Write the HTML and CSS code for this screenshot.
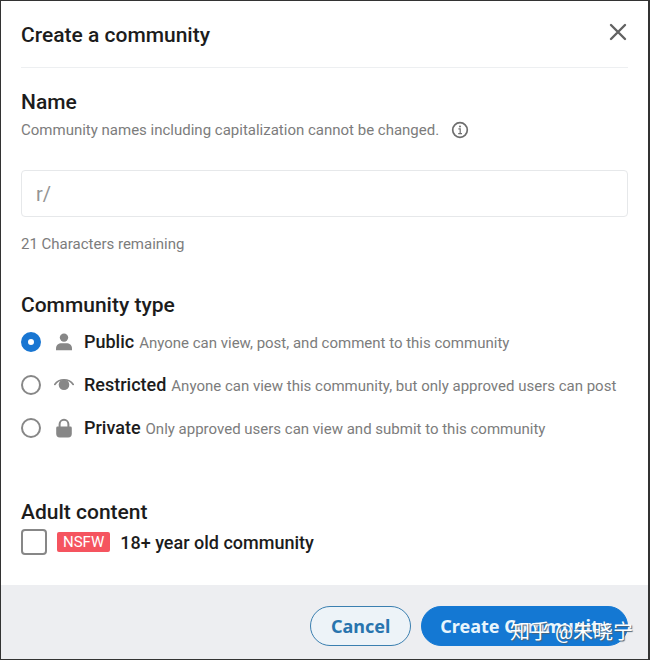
FILE: index.html
```html
<!DOCTYPE html>
<html lang="en">
<head>
<meta charset="utf-8">
<title>Create a community</title>
<link rel="stylesheet" href="styles.css">
</head>
<body>
<form class="dialog">
  <div class="content">
    <header class="header">
      <h1 class="heading">Create a community</h1>
      <button class="close" type="button" aria-label="Close">
        <svg width="18" height="18" viewBox="0 0 18 18"><path d="M2 2 16 16M16 2 2 16" fill="none" stroke="#626262" stroke-width="2.4" stroke-linecap="round"/></svg>
      </button>
    </header>

    <section class="name">
      <label class="heading" for="name">Name</label>
      <p class="hint">Community names including capitalization cannot be changed.
        <svg width="18" height="18" viewBox="0 0 18 18"><circle cx="9" cy="9" r="7.3" fill="none" stroke="#6e6e6e" stroke-width="1.7"/><path d="M7.4 7.8H9.2V12.4M7.2 12.6H11" fill="none" stroke="#6e6e6e" stroke-width="1.2"/><circle cx="9" cy="5.4" r="1" fill="#6e6e6e"/></svg>
      </p>
      <input class="field" id="name" type="text" placeholder="r/">
      <p class="hint">21 Characters remaining</p>
    </section>

    <fieldset class="types">
      <legend class="heading">Community type</legend>
      <label class="option">
        <input class="radio" type="radio" name="type" checked>
        <svg width="20" height="20" viewBox="0 0 20 20" fill="#878787"><circle cx="10" cy="5.6" r="4.2"/><path d="M2 18.2V16.6C2 12.8 4.6 11.2 7.6 11.2H12.4C15.4 11.2 18 12.8 18 16.6V18.2Z"/></svg>
        <span class="label"><span class="type">Public</span> <span class="note">Anyone can view, post, and comment to this community</span></span>
      </label>
      <label class="option">
        <input class="radio" type="radio" name="type">
        <svg width="20" height="20" viewBox="0 0 20 20"><path d="M.8 9.4C5 3.2 15 3.2 19.2 9.4" fill="none" stroke="#878787" stroke-width="1.7" stroke-linecap="round"/><circle cx="10" cy="9.8" r="5.3" fill="#878787"/></svg>
        <span class="label"><span class="type">Restricted</span> <span class="note">Anyone can view this community, but only approved users can post</span></span>
      </label>
      <label class="option">
        <input class="radio" type="radio" name="type">
        <svg width="20" height="20" viewBox="0 0 20 20"><path d="M5.6 10V6.2A4.4 4.4 0 0 1 14.4 6.2V10" fill="none" stroke="#878787" stroke-width="2"/><path d="M2.2 10Q2.2 8.6 3.6 8.6H16.4Q17.8 8.6 17.8 10V15.8Q17.8 19.4 14.2 19.4H5.8Q2.2 19.4 2.2 15.8Z" fill="#878787"/></svg>
        <span class="label"><span class="type">Private</span> <span class="note">Only approved users can view and submit to this community</span></span>
      </label>
    </fieldset>

    <section class="adult">
      <h2 class="heading">Adult content</h2>
      <label class="check-row">
        <input class="checkbox" type="checkbox">
        <span class="tag">NSFW</span>
        <span class="type">18+ year old community</span>
      </label>
    </section>
  </div>

  <footer class="footer">
    <button class="button" type="button">Cancel</button>
    <button class="button primary" type="submit">Create Community</button>
    <span class="watermark">知乎 @朱晓宁</span>
  </footer>
</form>
</body>
</html>
```

FILE: styles.css
```css
* {
  box-sizing: border-box;
}

body {
  margin: 0;
  font-family: Roboto, "Noto Sans CJK SC", sans-serif;
  color: #1c1c1c;
  background: #fff;
}

.dialog {
  display: flex;
  flex-direction: column;
  min-height: 100vh;
  border: 1px solid #333;
  border-right-width: 2px;
}

.content {
  flex: 1;
  padding: 22px 20px 30px;
}

.heading {
  display: block;
  margin: 0;
  padding: 0;
  font-size: 21px;
  font-weight: 500;
  line-height: 24px;
}

.header {
  display: flex;
  align-items: flex-start;
  justify-content: space-between;
  padding-bottom: 20px;
  border-bottom: 1px solid #edeff1;
}

.close {
  height: 18px;
  padding: 0 1px 0 0;
  border: 0;
  background: none;
}

svg {
  display: block;
  flex: none;
}

.name {
  padding-top: 22px;
}

.hint {
  display: flex;
  align-items: center;
  gap: 12px;
  margin: 6px 0 0;
  font-size: 15px;
  line-height: 20px;
  color: #7c7c7c;
}

.field {
  display: block;
  width: 100%;
  height: 47px;
  margin: 30px 0 17px;
  padding: 0 14px;
  border: 1px solid #e6e8ea;
  border-radius: 4px;
  font: 20px Roboto, sans-serif;
}

.field::placeholder {
  color: #949494;
}

.types {
  margin: 39px 0 0;
  padding: 0;
  border: 0;
}

.types .heading {
  margin-bottom: 3px;
}

.option {
  display: flex;
  align-items: center;
  height: 43px;
}

.radio {
  appearance: none;
  flex: none;
  width: 20px;
  height: 20px;
  margin: 0 13px 0 0;
  border: 2px solid #878787;
  border-radius: 50%;
}

.radio:checked {
  border: 7px solid #1976d2;
}

.label {
  margin-left: 10px;
  white-space: nowrap;
}

.type {
  font-size: 18px;
  font-weight: 500;
}

.note {
  margin-left: 1px;
  font-size: 15px;
  color: #7c7c7c;
}

.adult {
  padding-top: 51px;
}

.check-row {
  display: flex;
  align-items: center;
  gap: 10px;
  margin-top: 5px;
}

.checkbox {
  appearance: none;
  width: 26px;
  height: 26px;
  margin: 0;
  border: 2px solid #878787;
  border-radius: 4px;
}

.tag {
  padding: 0 6px;
  border-radius: 2px;
  background: #f5545f;
  color: #fff;
  font-size: 15px;
  line-height: 20px;
}

.footer {
  position: relative;
  display: flex;
  justify-content: flex-end;
  gap: 10px;
  padding: 21px 20px 13px;
  background: #edeef1;
}

.button {
  min-width: 101px;
  height: 40px;
  padding: 0 18px;
  border: 1px solid #3a7fb0;
  border-radius: 20px;
  background: #edf3f8;
  color: #2874ae;
  font: bold 18px "Noto Sans", sans-serif;
}

.primary {
  border-color: #1478d3;
  background: #1478d3;
  color: #e8f5fc;
}

.watermark {
  position: absolute;
  right: 15px;
  bottom: 12px;
  color: #fff;
  font-size: 20px;
  line-height: 30px;
  text-shadow: 1px 1px 1px #4d6478;
}
```
